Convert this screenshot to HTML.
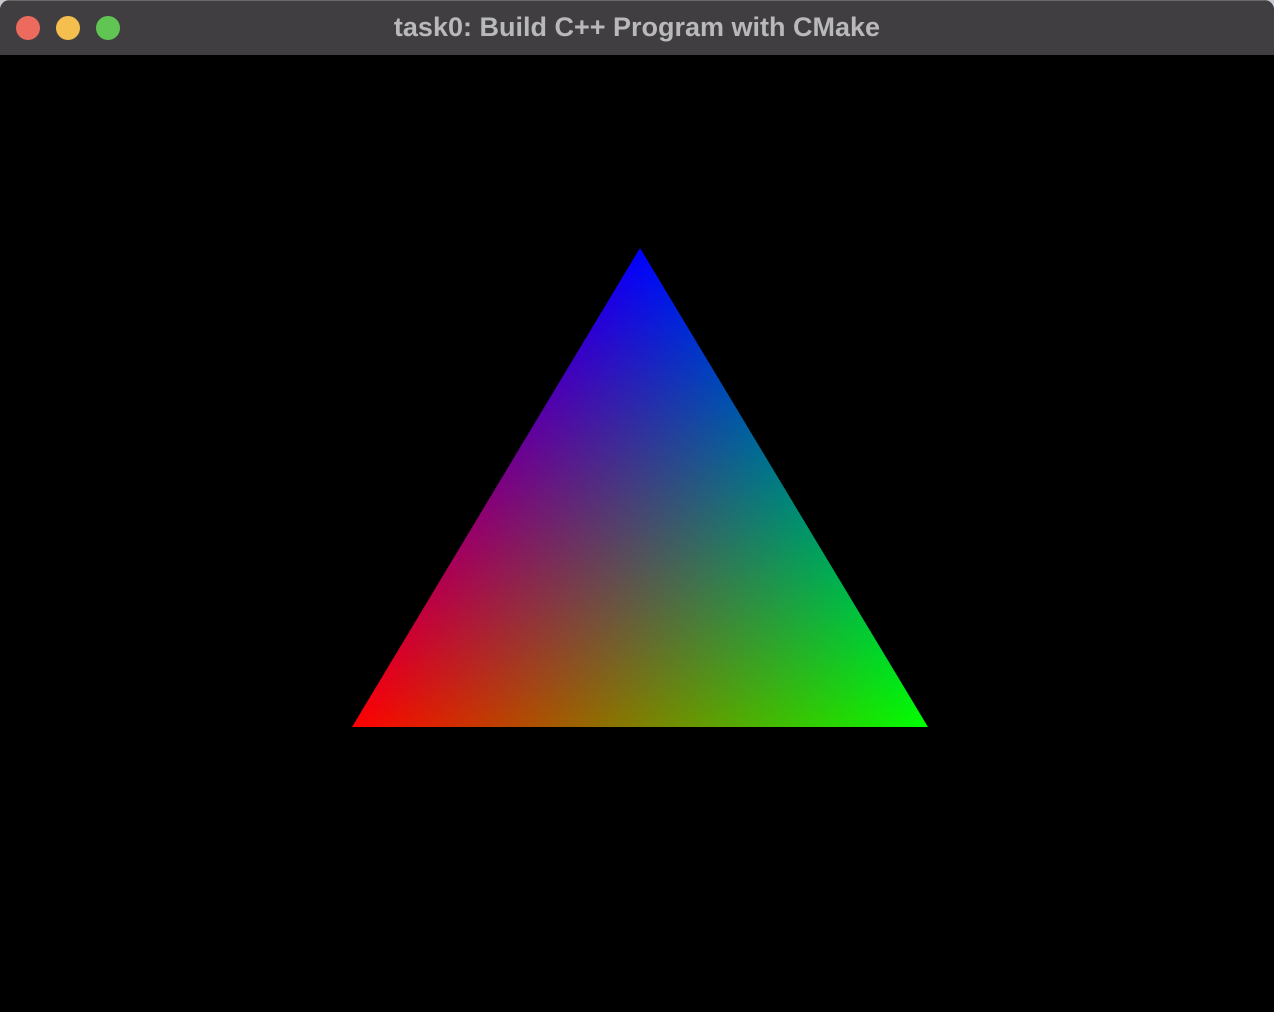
<!DOCTYPE html>
<html><head><style>
html,body{margin:0;padding:0;width:1274px;height:1012px;overflow:hidden;background:#c9c9d1;}
.win{position:absolute;left:0;top:0;width:1274px;height:1012px;background:#000;border-radius:10px 10px 0 0;overflow:hidden;}
.bar{position:absolute;left:0;top:0;width:1274px;height:55px;background:#403e41;border-top:1px solid #6a686b;box-sizing:border-box;}
.dot{position:absolute;top:15px;width:24px;height:24px;border-radius:50%;}
.title{position:absolute;left:0;width:1274px;top:11px;text-align:center;color:#b9b8ba;font:bold 27px "Liberation Sans",sans-serif;}
</style></head><body>
<div class="win">
<div class="bar">
<div class="dot" style="left:16px;background:#ec6a5e"></div>
<div class="dot" style="left:56px;background:#f4bf4f"></div>
<div class="dot" style="left:96px;background:#61c554"></div>
<div class="title">task0: Build C++ Program with CMake</div>
</div>
<svg width="1274" height="1012" style="position:absolute;left:0;top:0">
<defs>
<linearGradient id="r" gradientUnits="userSpaceOnUse" x1="352" y1="727" x2="775.1" y2="472.6"><stop offset="0" stop-color="#f00"/><stop offset="1" stop-color="#000"/></linearGradient>
<linearGradient id="g" gradientUnits="userSpaceOnUse" x1="928" y1="727" x2="504.9" y2="472.6"><stop offset="0" stop-color="#0f0"/><stop offset="1" stop-color="#000"/></linearGradient>
<linearGradient id="b" gradientUnits="userSpaceOnUse" x1="640" y1="248" x2="640" y2="727"><stop offset="0" stop-color="#00f"/><stop offset="1" stop-color="#000"/></linearGradient>
</defs>
<g style="isolation:isolate">
<polygon points="640,248 352,727 928,727" fill="url(#r)"/>
<polygon points="640,248 352,727 928,727" fill="url(#g)" style="mix-blend-mode:screen"/>
<polygon points="640,248 352,727 928,727" fill="url(#b)" style="mix-blend-mode:screen"/>
</g>
</svg>
</div>
</body></html>
